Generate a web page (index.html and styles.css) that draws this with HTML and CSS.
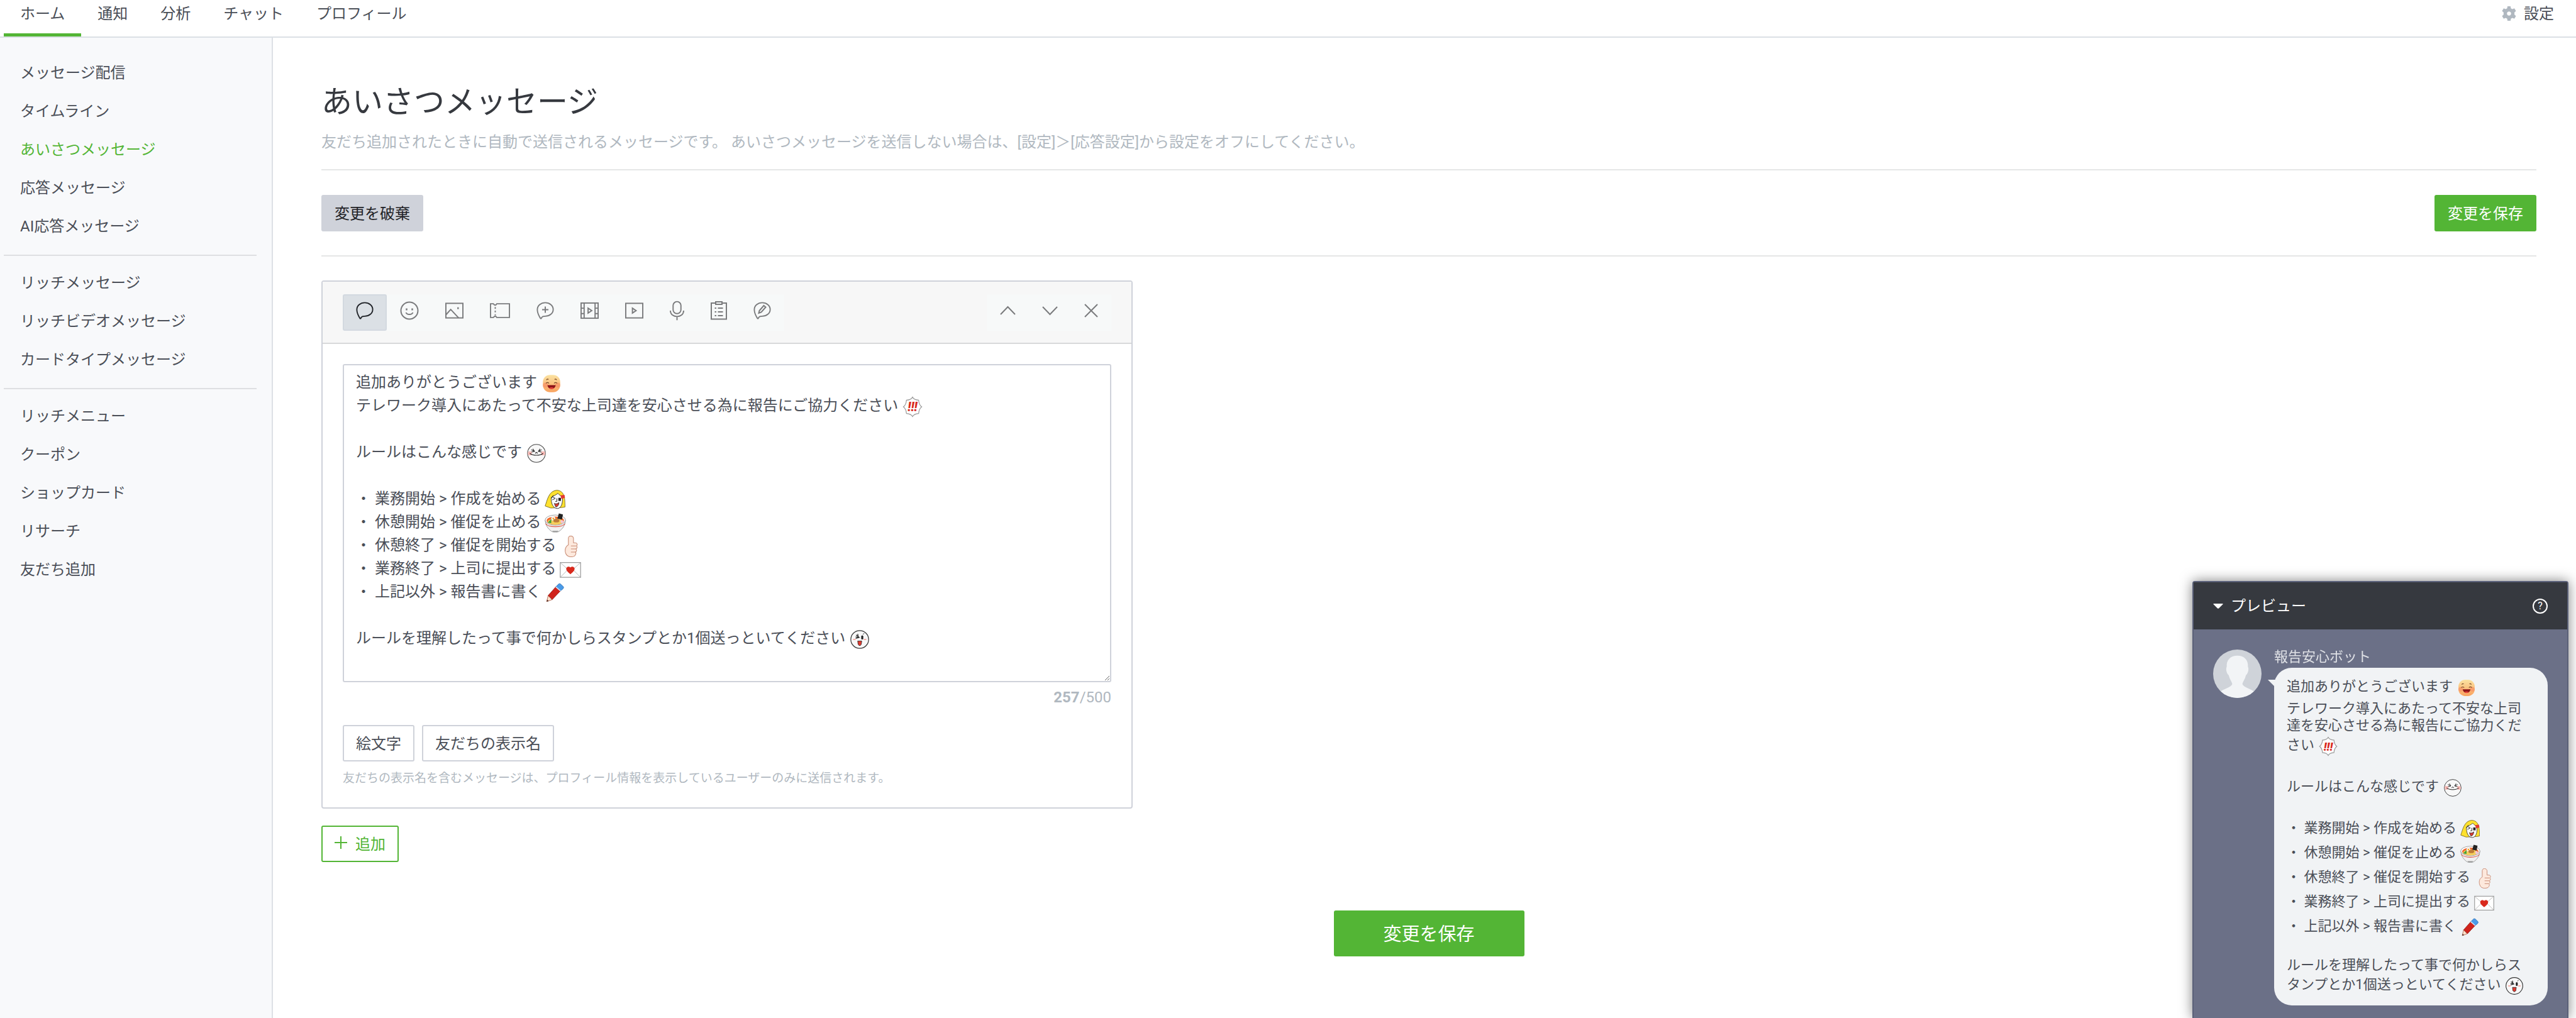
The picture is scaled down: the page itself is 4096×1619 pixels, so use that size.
FILE: index.html
```html
<!DOCTYPE html>
<html lang="ja">
<head>
<meta charset="utf-8">
<title>あいさつメッセージ</title>
<link rel="stylesheet" href="styles.css">
</head>

<body>
<svg class="defs">
	<defs>
		<linearGradient id="skin" x1="0" y1="0" x2="0" y2="1">
			<stop offset="0" stop-color="#fbe3a2"/>
			<stop offset="1" stop-color="#f9a25e"/>
		</linearGradient>
		<!-- toolbar icons -->
		<symbol id="i-bubble" viewBox="0 0 30 30">
			<path d="M7 28.500 L5.500 26 C3.500 22.500 1.500 18 1.500 13.500 C1.500 6.500 7.500 1.500 15 1.500 C22.500 1.500 28.500 6.500 28.500 13 C28.500 19.500 22.500 24.500 15 24.500 C12 24.500 9.500 24.500 8 28.500 Z"/>
		</symbol>
		<symbol id="i-smile" viewBox="0 0 30 30">
			<circle cx="15" cy="15" r="13.500"/>
			<path d="M9.500 18 C11 22 19 22 20.500 18"/>
			<path d="M10.500 11.500 v3 M19.500 11.500 v3" stroke-width="2.500"/>
		</symbol>
		<symbol id="i-image" viewBox="0 0 30 30">
			<rect x="1" y="3" width="28" height="24"/>
			<path d="M1 22 L9 13 L22 27"/>
			<path d="M21 9.500 v3" stroke-width="2.500"/>
		</symbol>
		<symbol id="i-ticket" viewBox="0 0 34 30">
			<path d="M1 3.500 H6 Q9 8 11.500 3.500 H33 V26.500 H11.500 Q9 22 6 26.500 H1 Z"/>
			<path d="M9 9 V23" stroke-dasharray="3 3"/>
		</symbol>
		<symbol id="i-film" viewBox="0 0 30 30">
			<rect x="1" y="2.500" width="28" height="25"/>
			<path d="M6 2.500 V27.500 M24 2.500 V27.500 M1 11 H6 M1 20 H6 M24 11 H29 M24 20 H29 M12.500 11 V19 L18.500 15 Z"/>
		</symbol>
		<symbol id="i-play" viewBox="0 0 30 30">
			<rect x="1" y="3" width="28" height="24"/>
			<path d="M12 11 V19 L18 15 Z"/>
		</symbol>
		<symbol id="i-mic" viewBox="0 0 24 34">
			<rect x="5.500" y="2" width="13" height="20" rx="6.500"/>
			<path d="M1 17 C1 30 23 30 23 17 M12 27 V33"/>
		</symbol>
		<symbol id="i-list" viewBox="0 0 26 30">
			<path d="M8 3 H1 V28.500 H25 V3 H18"/>
			<rect x="8" y="1" width="10" height="4"/>
			<path d="M6.500 11 H9 M11.500 11 H19.500 M6.500 17 H9 M11.500 17 H19.500 M6.500 23 H9 M11.500 23 H19.500"/>
		</symbol>
		<symbol id="i-up" viewBox="0 0 25 16"><path d="M1 14 L12.500 2 L24 14"/></symbol>
		<symbol id="i-down" viewBox="0 0 25 16"><path d="M1 2 L12.500 14 L24 2"/></symbol>
		<symbol id="i-close" viewBox="0 0 22 22"><path d="M1 1 L21 21 M21 1 L1 21"/></symbol>

		<!-- emoji -->
		<symbol id="e-laugh" viewBox="0 0 42 42">
			<rect x="4" y="4" width="34" height="34" rx="14" fill="url(#skin)"/>
			<circle cx="9" cy="24" r="5" fill="#f58a62" opacity=".6"/>
			<circle cx="33" cy="24" r="5" fill="#f58a62" opacity=".6"/>
			<path d="M11 14 q2-3 4-1 M27 13 q2-2 4 1 M10 20.500 q3-3 6 0 M26 20.500 q3-3 6 0" stroke="#7a4a2a" fill="none" stroke-width="1.500"/>
			<path d="M13 24 H29 C28 34 14 34 13 24 Z" fill="#8c1518"/>
			<path d="M16 30 Q21 27 26 30 Q21 33.500 16 30Z" fill="#e8433b"/>
		</symbol>
		<symbol id="e-burst" viewBox="0 0 42 42">
			<path d="M21 2 C23 6 26 7.500 33 8 C33.500 15 35 18 39 21 C35 24 33.500 27 33 34 C26 34.500 23 36 21 40 C19 36 16 34.500 9 34 C8.500 27 7 24 3 21 C7 18 8.500 15 9 8 C16 7.500 19 6 21 2 Z" fill="#fff" stroke="#999" stroke-width="1.500"/>
			<text x="21" y="30" text-anchor="middle" class="bang">!!!</text>
		</symbol>
		<symbol id="e-moon" viewBox="0 0 42 42">
			<circle cx="21" cy="21" r="17.500" fill="#f8f8f8" stroke="#444" stroke-width="1.300"/>
			<circle cx="8" cy="21" r="4" fill="#f8b9b5"/>
			<circle cx="34" cy="21" r="4" fill="#f8b9b5"/>
			<path d="M11 14 L17 17 L11 18.500 M14 12 L17 17 M31 14 L25 17 L31 18.500 M28 12 L25 17 M18.500 21 L21 19 L23.500 21 M8 21 C14 26 28 26 34 21" stroke="#222" fill="none" stroke-width="1.300"/>
		</symbol>
		<symbol id="e-blonde" viewBox="0 0 42 42">
			<path d="M1 33 C5 22 8 3 24 2 C40 3 40 20 40 35 L34 36 L12 37 Z" fill="#ffe12e" stroke="#665a20"/>
			<path d="M13 16 C18 13 23 11 26 8 C29 12 34 14 35 17 C36 28 32 38 25 38 C17 38 12 28 13 16 Z" fill="#fafafa" stroke="#222"/>
			<path d="M15 15 L21 18 L15 21 M24 18 V24 H21 M17 12 L13 18" stroke="#222" fill="none" stroke-width="1.200"/>
			<rect x="27" y="17" width="5" height="6" fill="#222"/>
			<path d="M19 28 Q25 30 28 26 Q28 34 22 35 Z" fill="#e23a30" stroke="#222"/>
			<path d="M31 12 L39 11 L40 17 L33 19 Z" fill="#e23a30"/>
		</symbol>
		<symbol id="e-ramen" viewBox="0 0 42 42">
			<path d="M1 15 C2 28 9 34 15 38 H27 C33 34 40 28 41 15 Z" fill="#f1f1f1" stroke="#888"/>
			<ellipse cx="21" cy="15" rx="20" ry="10" fill="#fff" stroke="#888"/>
			<ellipse cx="21" cy="16" rx="17" ry="8" fill="#f0682c"/>
			<ellipse cx="21" cy="18" rx="15" ry="6" fill="#f4cf5c"/>
			<path d="M2 22 C8 30 34 30 40 22" stroke="#e0584a" fill="none" stroke-width="1.500"/>
			<path d="M15 36 L27 36 L25 39 H17 Z" fill="#999"/>
			<circle cx="17" cy="12" r="4" fill="#fff" stroke="#bbb" stroke-width=".5"/><circle cx="17" cy="12" r="1.800" fill="#f7a81b"/>
			<ellipse cx="23" cy="16" rx="6" ry="3.500" fill="#bd7a38"/>
			<path d="M6 20 L13 13 L13 21 Z" fill="#3ba13c"/>
			<circle cx="34" cy="18" r="3" fill="#f3c4d8"/>
			<path d="M28 2 L36 4 L34 14 L25 12 Z" fill="#222"/>
		</symbol>
		<symbol id="e-thumb" viewBox="0 0 42 42">
			<path d="M17 18 V5 C17 -1 26 -1 27 5 V14 H30 C35 14 35 18 33 20 C35 22 34 25 32 26 C34 28 33 31 31 32 C33 35 31 38 29 40 C22 43 13 42 11 32 C10 25 12 21 17 18 Z" fill="#fde9dd" stroke="#c98d76" stroke-width="1.300"/>
			<path d="M22 20 H32 M22 26 H32 M22 32 H31" stroke="#c98d76" stroke-width="1.300"/>
		</symbol>
		<symbol id="e-mail" viewBox="0 0 42 42">
			<rect x="1" y="7" width="40" height="29" fill="#fff" stroke="#999" stroke-width="1.500"/>
			<path d="M1 7 L21 25 L41 7 M1 36 L16 21 M41 36 L26 21" stroke="#aaa" fill="none"/>
			<path d="M21 30 C15 25 12 22 13 18 C15 14 20 15 21 17 C22 15 27 14 29 18 C30 22 27 25 21 30 Z" fill="#d9291c"/>
		</symbol>
		<symbol id="e-pencil" viewBox="0 0 42 42">
			<path d="M4 38 L7 26 L15 34 Z" fill="#fbe3cd" stroke="#a9503a"/>
			<path d="M4 38 L5 34 L8 37 Z" fill="#4a2a20"/>
			<path d="M7 26 L22 9 L31 17 L15 34 Z" fill="#d0231b" stroke="#8f1a14"/>
			<path d="M22 9 L28 3 Q30 2 32 4 L37 9 Q38 11 36 13 L31 17 Z" fill="#4a9be8" stroke="#2c6cb0"/>
			<path d="M22 9 L31 17" stroke="#cfe4f7" stroke-width="2"/>
		</symbol>
		<symbol id="e-shout" viewBox="0 0 42 42">
			<circle cx="21" cy="21" r="17.500" fill="#f8f8f8" stroke="#333" stroke-width="1.500"/>
			<path d="M14 12 L20 17 L13 19 M17 10 L18 15 M13 16 L20 17" stroke="#222" fill="none" stroke-width="1.500"/>
			<rect x="24" y="13" width="4" height="8" rx="2" fill="#222"/>
			<path d="M27 11 L30 9" stroke="#222"/>
			<path d="M8 21 H13 M29 21 H34" stroke="#f8b0ac" stroke-width="2.500"/>
			<path d="M17 24 H25 L24 31 Q21 35 18 31 Z" fill="#e23a30" stroke="#222"/>
		</symbol>
	</defs>
</svg>

<header class="header">
	<nav class="tabs">
		<a href="#" class="active">ホーム</a>
		<a href="#">通知</a>
		<a href="#">分析</a>
		<a href="#">チャット</a>
		<a href="#">プロフィール</a>
	</nav>
	<a href="#" class="setting">
		<svg class="gear" viewBox="0 0 28 28"><path fill-rule="evenodd" d="M11 0 H17 L17.600 4 L20.500 5.500 L24.300 4 L27.500 9 L24.500 11.800 V16.200 L27.500 19 L24.300 24 L20.500 22.500 L17.600 24 L17 28 H11 L10.400 24 L7.500 22.500 L3.700 24 L.5 19 L3.500 16.200 V11.800 L.5 9 L3.700 4 L7.500 5.500 L10.400 4 Z M14 10 a4 4 0 1 0 .01 0 Z"/></svg>
		設定
	</a>
</header>

<div class="wrap">
	<aside class="side">
		<ul>
			<li><a href="#">メッセージ配信</a></li>
			<li><a href="#">タイムライン</a></li>
			<li><a href="#" class="active">あいさつメッセージ</a></li>
			<li><a href="#">応答メッセージ</a></li>
			<li><a href="#">AI応答メッセージ</a></li>
		</ul>
		<ul>
			<li><a href="#">リッチメッセージ</a></li>
			<li><a href="#">リッチビデオメッセージ</a></li>
			<li><a href="#">カードタイプメッセージ</a></li>
		</ul>
		<ul>
			<li><a href="#">リッチメニュー</a></li>
			<li><a href="#">クーポン</a></li>
			<li><a href="#">ショップカード</a></li>
			<li><a href="#">リサーチ</a></li>
			<li><a href="#">友だち追加</a></li>
		</ul>
	</aside>

	<main class="main">
		<h1>あいさつメッセージ</h1>
		<p class="lead">友だち追加されたときに自動で送信されるメッセージです。 あいさつメッセージを送信しない場合は、[設定]＞[応答設定]から設定をオフにしてください。</p>

		<div class="actions">
			<button type="button" class="btn discard">変更を破棄</button>
			<button type="button" class="btn save">変更を保存</button>
		</div>

		<section class="card">
			<div class="toolbar">
				<div class="group">
					<button type="button" class="active" aria-label="テキスト"><svg width="28" height="30"><use href="#i-bubble"/></svg></button>
					<button type="button" aria-label="スタンプ"><svg width="30" height="30"><use href="#i-smile"/></svg></button>
					<button type="button" aria-label="画像"><svg width="29" height="30"><use href="#i-image"/></svg></button>
					<button type="button" aria-label="クーポン"><svg width="32" height="30"><use href="#i-ticket"/></svg></button>
					<button type="button" aria-label="リッチメッセージ"><svg width="28" height="30"><use href="#i-bubble"/><path d="M14 8.500 V18.500 M9 13.500 H19"/></svg></button>
					<button type="button" aria-label="リッチビデオ"><svg width="29" height="30"><use href="#i-film"/></svg></button>
					<button type="button" aria-label="動画"><svg width="29" height="30"><use href="#i-play"/></svg></button>
					<button type="button" aria-label="ボイス"><svg width="23" height="34"><use href="#i-mic"/></svg></button>
					<button type="button" aria-label="リサーチ"><svg width="26" height="30"><use href="#i-list"/></svg></button>
					<button type="button" aria-label="カードタイプ"><svg width="28" height="30"><use href="#i-bubble"/><path d="M8.500 19 L9.500 15 L16.500 7 L19.500 9.500 L12.500 17.500 Z"/></svg></button>
				</div>
				<div class="group">
					<button type="button" aria-label="上へ"><svg width="25" height="16"><use href="#i-up"/></svg></button>
					<button type="button" aria-label="下へ"><svg width="25" height="16"><use href="#i-down"/></svg></button>
					<button type="button" aria-label="削除"><svg width="22" height="22"><use href="#i-close"/></svg></button>
				</div>
			</div>
			<div class="cardBody">
				<div class="editor" contenteditable="true" role="textbox" aria-multiline="true" aria-label="メッセージ">追加ありがとうございます<svg class="emoji"><use href="#e-laugh"/></svg><br>
テレワーク導入にあたって不安な上司達を安心させる為に報告にご協力ください<svg class="emoji"><use href="#e-burst"/></svg><br>
<br>
ルールはこんな感じです<svg class="emoji"><use href="#e-moon"/></svg><br>
<br>
・ 業務開始 &gt; 作成を始める<svg class="emoji"><use href="#e-blonde"/></svg><br>
・ 休憩開始 &gt; 催促を止める<svg class="emoji"><use href="#e-ramen"/></svg><br>
・ 休憩終了 &gt; 催促を開始する<svg class="emoji"><use href="#e-thumb"/></svg><br>
・ 業務終了 &gt; 上司に提出する<svg class="emoji"><use href="#e-mail"/></svg><br>
・ 上記以外 &gt; 報告書に書く<svg class="emoji"><use href="#e-pencil"/></svg><br>
<br>
ルールを理解したって事で何かしらスタンプとか1個送っといてください<svg class="emoji"><use href="#e-shout"/></svg></div>
				<p class="count"><b>257</b>/500</p>
				<div class="inserts">
					<button type="button" class="btn outline">絵文字</button>
					<button type="button" class="btn outline">友だちの表示名</button>
				</div>
				<p class="hint">友だちの表示名を含むメッセージは、プロフィール情報を表示しているユーザーのみに送信されます。</p>
			</div>
		</section>

		<button type="button" class="btn add"><svg width="20" height="20" viewBox="0 0 20 20"><path d="M10 0 V20 M0 10 H20"/></svg>追加</button>
		<button type="button" class="btn submit">変更を保存</button>
	</main>
</div>

<div class="preview">
	<div class="previewHead">
		<svg width="16" height="8" viewBox="0 0 16 8"><path d="M1 0 H15 Q16 0 15.500 1 L9 7.500 Q8 8 7 7.500 L.5 1 Q0 0 1 0 Z"/></svg>
		<span>プレビュー</span>
		<button type="button" class="help" aria-label="ヘルプ">?</button>
	</div>
	<div class="talk">
		<svg class="avatar" viewBox="0 0 96 96">
			<clipPath id="round"><circle cx="48" cy="48" r="48"/></clipPath>
			<g clip-path="url(#round)">
				<rect width="96" height="96" fill="#cfd3d9"/>
				<path d="M48 12 C62 12 70 21 69 34 C72 40 68 49 65 51 C63 59 59 64 58 68 C60 76 76 77 84 86 V96 H12 V86 C20 77 36 76 38 68 C37 64 33 59 31 51 C28 49 24 40 27 34 C26 21 34 12 48 12 Z" fill="#f2f4f6"/>
			</g>
		</svg>
		<div class="talkBody">
			<div class="name">報告安心ボット</div>
			<div class="bubble">追加ありがとうございます<svg class="emoji"><use href="#e-laugh"/></svg><br>
テレワーク導入にあたって不安な上司達を安心させる為に報告にご協力ください<svg class="emoji"><use href="#e-burst"/></svg><br>
<br>
ルールはこんな感じです<svg class="emoji"><use href="#e-moon"/></svg><br>
<br>
・ 業務開始 &gt; 作成を始める<svg class="emoji"><use href="#e-blonde"/></svg><br>
・ 休憩開始 &gt; 催促を止める<svg class="emoji"><use href="#e-ramen"/></svg><br>
・ 休憩終了 &gt; 催促を開始する<svg class="emoji"><use href="#e-thumb"/></svg><br>
・ 業務終了 &gt; 上司に提出する<svg class="emoji"><use href="#e-mail"/></svg><br>
・ 上記以外 &gt; 報告書に書く<svg class="emoji"><use href="#e-pencil"/></svg><br>
<br>
ルールを理解したって事で何かしらスタンプとか1個送っといてください<svg class="emoji"><use href="#e-shout"/></svg></div>
		</div>
	</div>
</div>
</body>
</html>
```

FILE: styles.css
```css
*{box-sizing:border-box;}
body{
	margin:0;
	min-height:100vh;
	display:flex;
	flex-direction:column;
	font-family:Roboto, "Noto Sans CJK JP", sans-serif;
	font-size:24px;
	line-height:36px;
	color:#4a4e57;
	background:#fff;
}
a{color:inherit; text-decoration:none;}
ul,p,h1{margin:0; padding:0;}
ul{list-style:none;}
button{font-family:inherit; font-size:24px; color:inherit; cursor:pointer;}
.defs{position:absolute; width:0; height:0;}

/* header */
.header{
	display:flex;
	justify-content:space-between;
	height:60px;
	padding:0 35px 0 6px;
	border-bottom:2px solid #dbe0e5;
}
.tabs{display:flex;}
.tabs a{
	padding:4px 26px 0;
	border-bottom:5px solid transparent;
}
.tabs .active{border-color:#53b535;}
.setting{display:flex; gap:12px; padding-top:4px;}
.gear{width:23px; height:23px; margin-top:6px; fill:#b0b8c0;}

/* sidebar */
.wrap{flex:1; display:flex;}
.side{
	width:434px;
	padding:26px 24px 24px 6px;
	background:#f8f9fb;
	border-right:2px solid #dde0e6;
}
.side ul + ul{
	margin-top:14px;
	padding-top:13px;
	border-top:2px solid #dedfe2;
}
.side a{display:block; padding:0 26px; line-height:61px;}
.side .active{color:#53b535;}

/* main */
.main{flex:1; padding:74px 63px 0 77px;}
h1{
	font-size:49px;
	line-height:58px;
	font-weight:400;
	color:#36393f;
}
.lead{
	padding:16px 0 25px;
	color:#b0b8c0;
	border-bottom:2px solid #e5e6e6;
}
.actions{
	display:flex;
	justify-content:space-between;
	padding:39px 0 38px;
	border-bottom:2px solid #e5e6e6;
}
.btn{
	height:58px;
	padding:0 19px 4px;
	border:2px solid transparent;
	border-radius:3px;
	background:#fff;
}
.discard{background:#cfd2da; color:#1f2227;}
.save,.submit{background:#53b535; color:#fff;}
.outline{border-color:#cfd2da;}
.add{
	display:flex;
	align-items:center;
	gap:13px;
	margin-top:27px;
	border-color:#53b535;
	color:#53b535;
}
.add svg{stroke:#53b535; stroke-width:2;}
.submit{
	display:block;
	width:303px;
	height:73px;
	margin:77px auto 0;
	font-size:29px;
}

.card{
	max-width:1290px;
	margin-top:38px;
	border:2px solid #cfd2da;
	border-radius:4px;
}
.toolbar{
	display:flex;
	justify-content:space-between;
	padding:20px 32px 19px;
	background:#f7f7f7;
	border-bottom:2px solid #d8d9da;
}
.group{display:flex; background:#f7f9f9;}
.group button{
	display:flex;
	align-items:center;
	height:58px;
	padding:0 19px 6px;
	border:2px solid transparent;
	border-radius:3px;
	background:none;
}
.group .active{background:#dbe0e5; border-color:#d3d9e0;}
.group svg{fill:none; stroke:#7a7b7d; stroke-width:2;}
.group .active svg{stroke:#1f2227;}
.cardBody{padding:32px;}
.editor{
	height:506px;
	padding:9px 19px;
	border:2px solid #cfd2da;
	border-radius:3px;
	line-height:37px;
	overflow:auto;
	resize:vertical;
}
.emoji{
	width:34px;
	height:34px;
	margin:-2px 4px -2px 6px;
	vertical-align:middle;
}
.bang{font:italic 900 24px Roboto, sans-serif; fill:#d9291c;}
.count{margin-top:6px; text-align:right; color:#b0b8c0;}
.inserts{display:flex; gap:12px; margin-top:26px;}
.hint{
	margin-top:13px;
	font-size:19px;
	line-height:28px;
	color:#b0b8c0;
}

/* preview */
.preview{
	position:fixed;
	right:12px;
	bottom:0;
	width:598px;
	border:2px solid #5a6078;
	border-bottom:0;
	border-radius:4px 4px 0 0;
	background:#6b7087;
	box-shadow:0 0 20px rgba(0,0,0,.5);
}
.previewHead{
	display:flex;
	align-items:center;
	height:75px;
	padding:0 31px;
	background:#36393f;
	color:#fff;
}
.previewHead svg{margin-right:12px; fill:#fff;}
.help{
	width:24px;
	height:24px;
	margin-left:auto;
	padding:0;
	border:2px solid #fff;
	border-radius:50%;
	background:none;
	color:#fff;
	font-size:16px;
	line-height:20px;
}
.talk{
	display:flex;
	align-items:flex-start;
	gap:20px;
	padding:30px 31px 20px;
	font-size:22px;
	line-height:27px;
}
.avatar{width:77px; height:77px; margin-top:2px;}
.talkBody{flex:1;}
.name{color:#dfe1e6;}
.bubble{
	position:relative;
	margin-top:4px;
	padding:12px 24px 12px 20px;
	border-radius:28px;
	background:#f1f3f5;
}
.bubble:before{
	content:"";
	position:absolute;
	left:-10px;
	top:19px;
	border-top:12px solid #f1f3f5;
	border-left:12px solid transparent;
}
.bubble .emoji{width:32px; height:32px; margin:4px 4px 3px 6px;}
```
